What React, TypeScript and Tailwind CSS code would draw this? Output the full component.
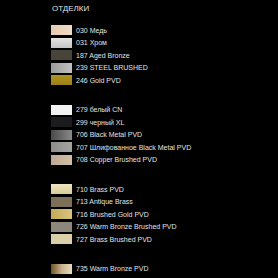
const groups: { code: string; name: string; bg: string }[][] = [
  [
    { code: "030", name: "Медь", bg: "bg-gradient-to-r from-[#e6cbb0] to-[#f0dcc6]" },
    { code: "031", name: "Хром", bg: "bg-gradient-to-b from-[#e4e4e4] to-[#c4c4c4]" },
    { code: "187", name: "Aged Bronze", bg: "bg-[#47443a]" },
    { code: "239", name: "STEEL BRUSHED", bg: "bg-gradient-to-r from-[#9a9a9a] to-[#c2c2c2]" },
    { code: "246", name: "Gold PVD", bg: "bg-gradient-to-b from-[#b09424] to-[#9c8018]" },
  ],
  [
    { code: "279", name: "белый CN", bg: "bg-[#f2f2f2]" },
    { code: "299", name: "черный XL", bg: "bg-[#1c1c1e]" },
    { code: "706", name: "Black Metal PVD", bg: "bg-gradient-to-r from-[#4a4a4a] to-[#8a8a8a]" },
    { code: "707", name: "Шлифованное Black Metal PVD", bg: "bg-gradient-to-r from-[#8c8c8a] to-[#a4a4a0]" },
    { code: "708", name: "Copper Brushed PVD", bg: "bg-gradient-to-r from-[#bfa994] to-[#d2bea8]" },
  ],
  [
    { code: "710", name: "Brass PVD", bg: "bg-gradient-to-b from-[#efe6c0] to-[#d8cc98]" },
    { code: "713", name: "Antique Brass", bg: "bg-[#7c7158]" },
    { code: "716", name: "Brushed Gold PVD", bg: "bg-gradient-to-r from-[#c4aa58] to-[#d8c480]" },
    { code: "726", name: "Warm Bronze Brushed PVD", bg: "bg-[#8d867c]" },
    { code: "727", name: "Brass Brushed PVD", bg: "bg-[#d9cfa8]" },
  ],
  [{ code: "735", name: "Warm Bronze PVD", bg: "bg-gradient-to-r from-[#6e5428] via-[#c8b088] to-[#e8dcc0]" }],
];

export default function App() {
  return (
    <div className="w-[278px] h-[278px] bg-black overflow-hidden pl-[51px] pt-[3px] font-['Liberation_Sans',Arial,sans-serif] text-[#e2e2e2]">
      <div className="text-[8px] leading-[12px] pl-px">ОТДЕЛКИ</div>
      <div className="mt-[9px] flex flex-col gap-[17px]">
        {groups.map((g, gi) => (
          <div key={gi} className="flex flex-col">
            {g.map((f) => (
              <div key={f.code} className="flex items-center h-[12.5px]">
                <div className={`w-[21px] h-[10px] shrink-0 ${f.bg}`} />
                <span className="ml-[4px] text-[7px] leading-none whitespace-nowrap">
                  {f.code} {f.name}
                </span>
              </div>
            ))}
          </div>
        ))}
      </div>
    </div>
  );
}
